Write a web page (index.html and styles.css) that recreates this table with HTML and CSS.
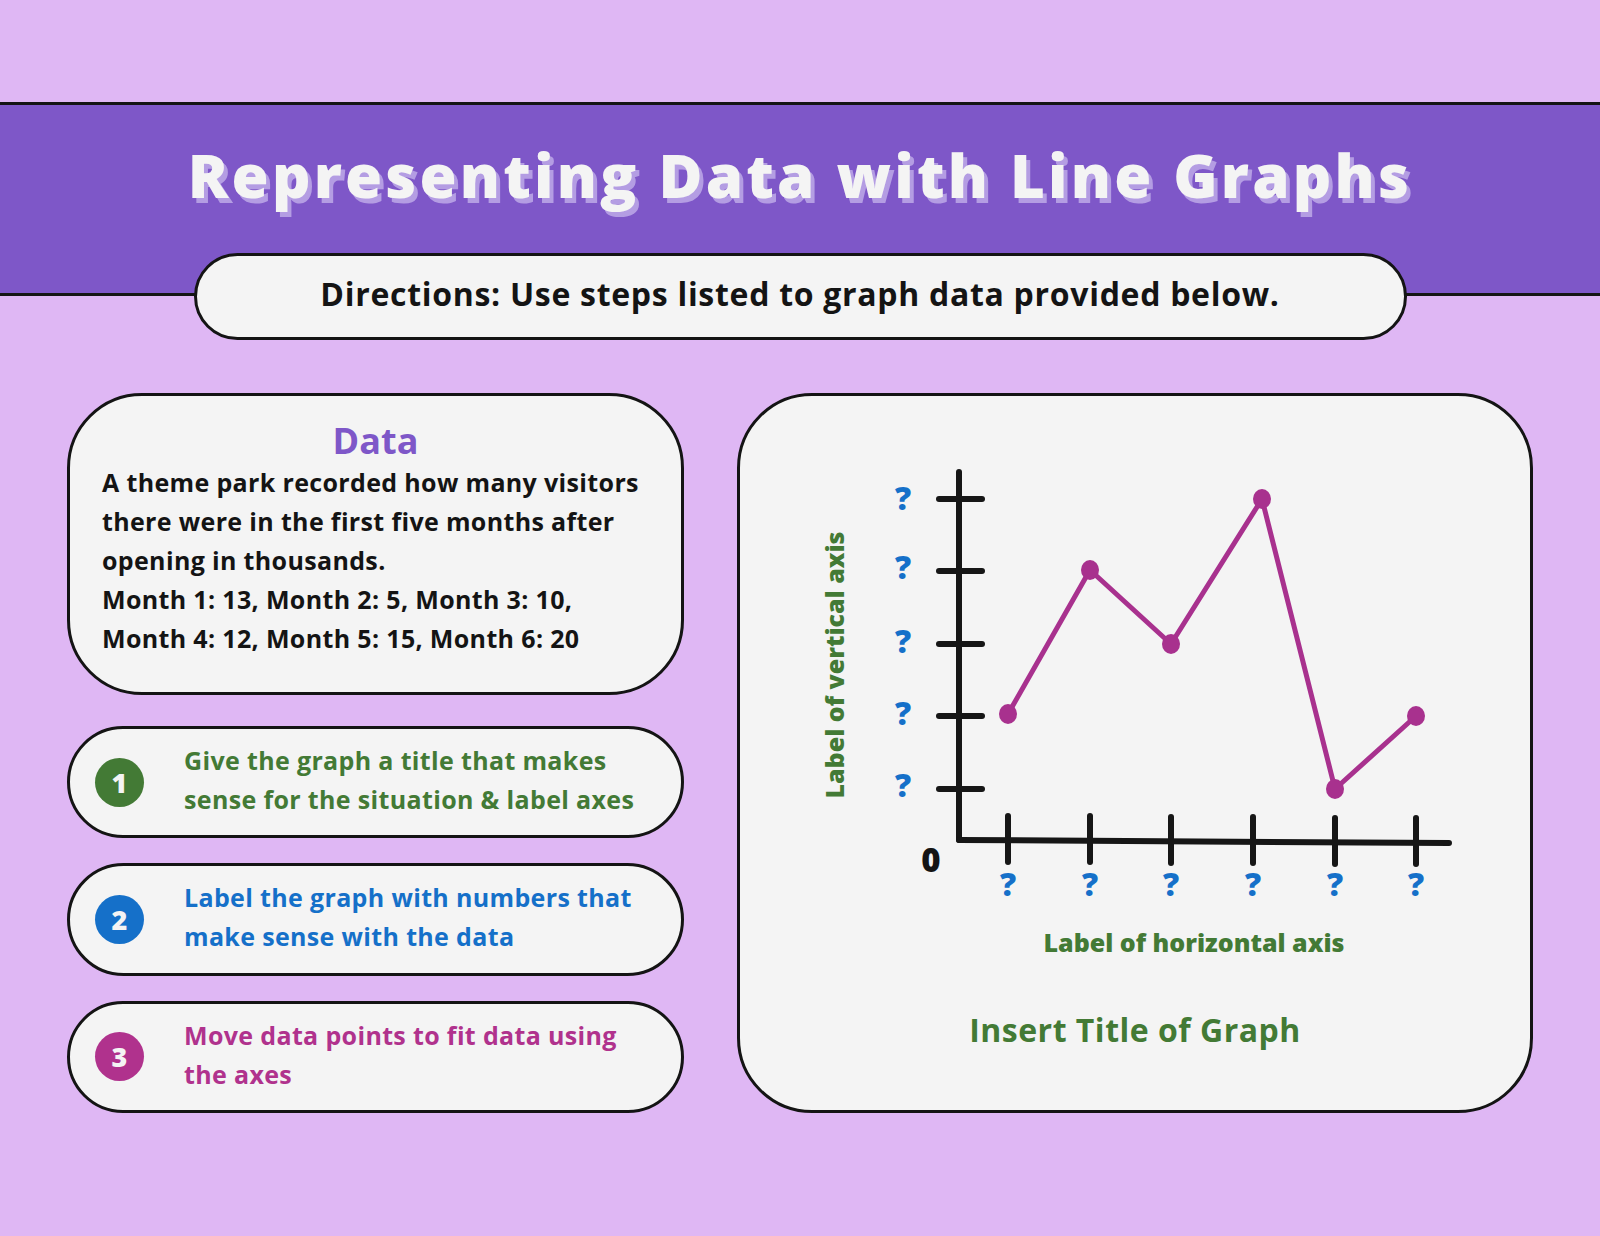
FILE: index.html
```html
<!DOCTYPE html>
<html lang="en">
<head>
<meta charset="utf-8">
<title>Representing Data with Line Graphs</title>
<link rel="stylesheet" href="styles.css">
</head>
<body>
<div class="page">
  <header class="banner">
    <h1 class="title">Representing Data with Line Graphs</h1>
    <div class="directions">Directions: Use steps listed to graph data provided below.</div>
  </header>
  <main class="main">
    <section class="left">
      <div class="card data-card">
        <h2 class="data-title">Data</h2>
        <p class="data-text">A theme park recorded how many visitors there were in the first five months after opening in thousands.<br>Month 1: 13, Month 2: 5, Month 3: 10,<br>Month 4: 12, Month 5: 15, Month 6: 20</p>
      </div>
      <div class="card step step-green">
        <span class="num">1</span>
        <p class="step-text">Give the graph a title that makes sense for the situation &amp; label axes</p>
      </div>
      <div class="card step step-blue">
        <span class="num">2</span>
        <p class="step-text">Label the graph with numbers that make sense with the data</p>
      </div>
      <div class="card step step-pink">
        <span class="num">3</span>
        <p class="step-text">Move data points to fit data using the axes</p>
      </div>
    </section>
    <section class="card graph-card">
      <svg class="chart" width="790" height="612" viewBox="0 0 790 612">
        <g class="axes" stroke="#161616" stroke-width="6" stroke-linecap="round" fill="none">
          <line x1="219" y1="76" x2="219" y2="444"/>
          <line x1="219" y1="444" x2="709" y2="447"/>
          <line x1="199" y1="103" x2="242" y2="103"/>
          <line x1="199" y1="175" x2="242" y2="175"/>
          <line x1="199" y1="248" x2="242" y2="248"/>
          <line x1="199" y1="320" x2="242" y2="320"/>
          <line x1="199" y1="393" x2="242" y2="393"/>
          <line x1="268" y1="420" x2="268" y2="466"/>
          <line x1="350" y1="420" x2="350" y2="466"/>
          <line x1="431" y1="421" x2="431" y2="467"/>
          <line x1="513" y1="421" x2="513" y2="467"/>
          <line x1="595" y1="422" x2="595" y2="468"/>
          <line x1="676" y1="422" x2="676" y2="468"/>
        </g>
        <polyline class="series" points="268,318 350,174 431,248 522,103 595,393 676,320" fill="none" stroke="#a8318e" stroke-width="5" stroke-linejoin="round"/>
        <g fill="#a8318e">
          <ellipse cx="268" cy="318" rx="9" ry="10"/>
          <ellipse cx="350" cy="174" rx="9" ry="10"/>
          <ellipse cx="431" cy="248" rx="9" ry="10"/>
          <ellipse cx="522" cy="103" rx="9" ry="10"/>
          <ellipse cx="595" cy="393" rx="9" ry="10"/>
          <ellipse cx="676" cy="320" rx="9" ry="10"/>
        </g>
        <g class="q" text-anchor="middle">
          <text x="163" y="114">?</text>
          <text x="163" y="183">?</text>
          <text x="163" y="257">?</text>
          <text x="163" y="329">?</text>
          <text x="163" y="401">?</text>
          <text x="268" y="500">?</text>
          <text x="350" y="500">?</text>
          <text x="431" y="500">?</text>
          <text x="513" y="500">?</text>
          <text x="595" y="500">?</text>
          <text x="676" y="500">?</text>
        </g>
        <text class="zero" x="191" y="476" text-anchor="middle">0</text>
        <text class="axis-label" x="0" y="0" text-anchor="middle" transform="translate(104 269) rotate(-90)">Label of vertical axis</text>
        <text class="axis-label" x="454" y="556" text-anchor="middle">Label of horizontal axis</text>
      </svg>
      <h2 class="graph-title">Insert Title of Graph</h2>
    </section>
  </main>
</div>
</body>
</html>
```

FILE: styles.css
```css
* { box-sizing: border-box; }

html, body {
  margin: 0;
  padding: 0;
}

body {
  background: #dfb7f4;
  font-family: "Open Sans", "Noto Sans", sans-serif;
  color: #141414;
}

.page {
  width: 1600px;
  height: 1236px;
  padding-top: 102px;
  overflow: hidden;
}

.banner {
  background: #7e57c8;
  border-top: 3px solid #141414;
  border-bottom: 3px solid #141414;
  padding-top: 40px;
  display: flex;
  flex-direction: column;
  align-items: center;
}

.title {
  margin: 0;
  font-size: 60px;
  line-height: 60px;
  font-weight: 800;
  color: #f4f4f4;
  text-shadow: 4px 5px 0 #b49de3;
  letter-spacing: 3.2px;
}

.directions {
  position: relative;
  margin-top: 48px;
  margin-bottom: -47px;
  width: 1213px;
  height: 87px;
  padding-bottom: 7px;
  background: #f4f4f4;
  border: 3px solid #141414;
  border-radius: 44px;
  display: flex;
  align-items: center;
  justify-content: center;
  font-size: 32px;
  font-weight: 700;
  letter-spacing: 0.7px;
  color: #141414;
}

.main {
  margin-top: 97px;
  padding-left: 67px;
  display: flex;
  gap: 53px;
}

.card {
  background: #f4f4f4;
  border: 3px solid #141414;
}

.left {
  width: 617px;
  height: 720px;
  display: flex;
  flex-direction: column;
  gap: 25px;
}

.data-card {
  height: 302px;
  flex: none;
  margin-bottom: 6px;
  border-radius: 75px;
  padding: 24px 16px 0 32px;
}

.data-title {
  margin: 0;
  text-align: center;
  font-size: 36px;
  line-height: 42px;
  font-weight: 700;
  color: #7e57c8;
  padding-right: 16px;
}

.data-text {
  margin: 1px 0 0;
  font-size: 25px;
  line-height: 39px;
  font-weight: 700;
  letter-spacing: 0.35px;
  color: #141414;
}

.step {
  flex: 1;
  border-radius: 58px;
  display: flex;
  align-items: center;
  padding-left: 25px;
  padding-right: 30px;
}

.num {
  flex: none;
  width: 49px;
  height: 49px;
  border-radius: 50%;
  display: flex;
  align-items: center;
  justify-content: center;
  color: #f4f4f4;
  font-size: 27px;
  font-weight: 800;
  margin-right: 40px;
}

.step-text {
  margin: 0;
  padding-bottom: 4px;
  font-size: 25px;
  line-height: 39px;
  font-weight: 700;
  letter-spacing: 0.35px;
}

.step-green .num { background: #437a35; }
.step-green .step-text { color: #437a35; }
.step-blue .num { background: #1570c9; }
.step-blue .step-text { color: #1570c9; }
.step-pink .num { background: #b0328d; }
.step-pink .step-text { color: #b0328d; }

.graph-card {
  width: 796px;
  height: 720px;
  border-radius: 75px;
  overflow: hidden;
}

.chart {
  display: block;
}

.chart text {
  font-family: "Open Sans", "Noto Sans", sans-serif;
  font-weight: 800;
}

.q {
  fill: #1570c9;
  font-size: 32px;
}

.zero {
  fill: #141414;
  font-size: 33px;
}

.axis-label {
  fill: #437a35;
  font-size: 25px;
}

.graph-title {
  margin: 2px 0 0;
  text-align: center;
  font-size: 32px;
  line-height: 40px;
  font-weight: 700;
  letter-spacing: 0.5px;
  color: #437a35;
}
```
